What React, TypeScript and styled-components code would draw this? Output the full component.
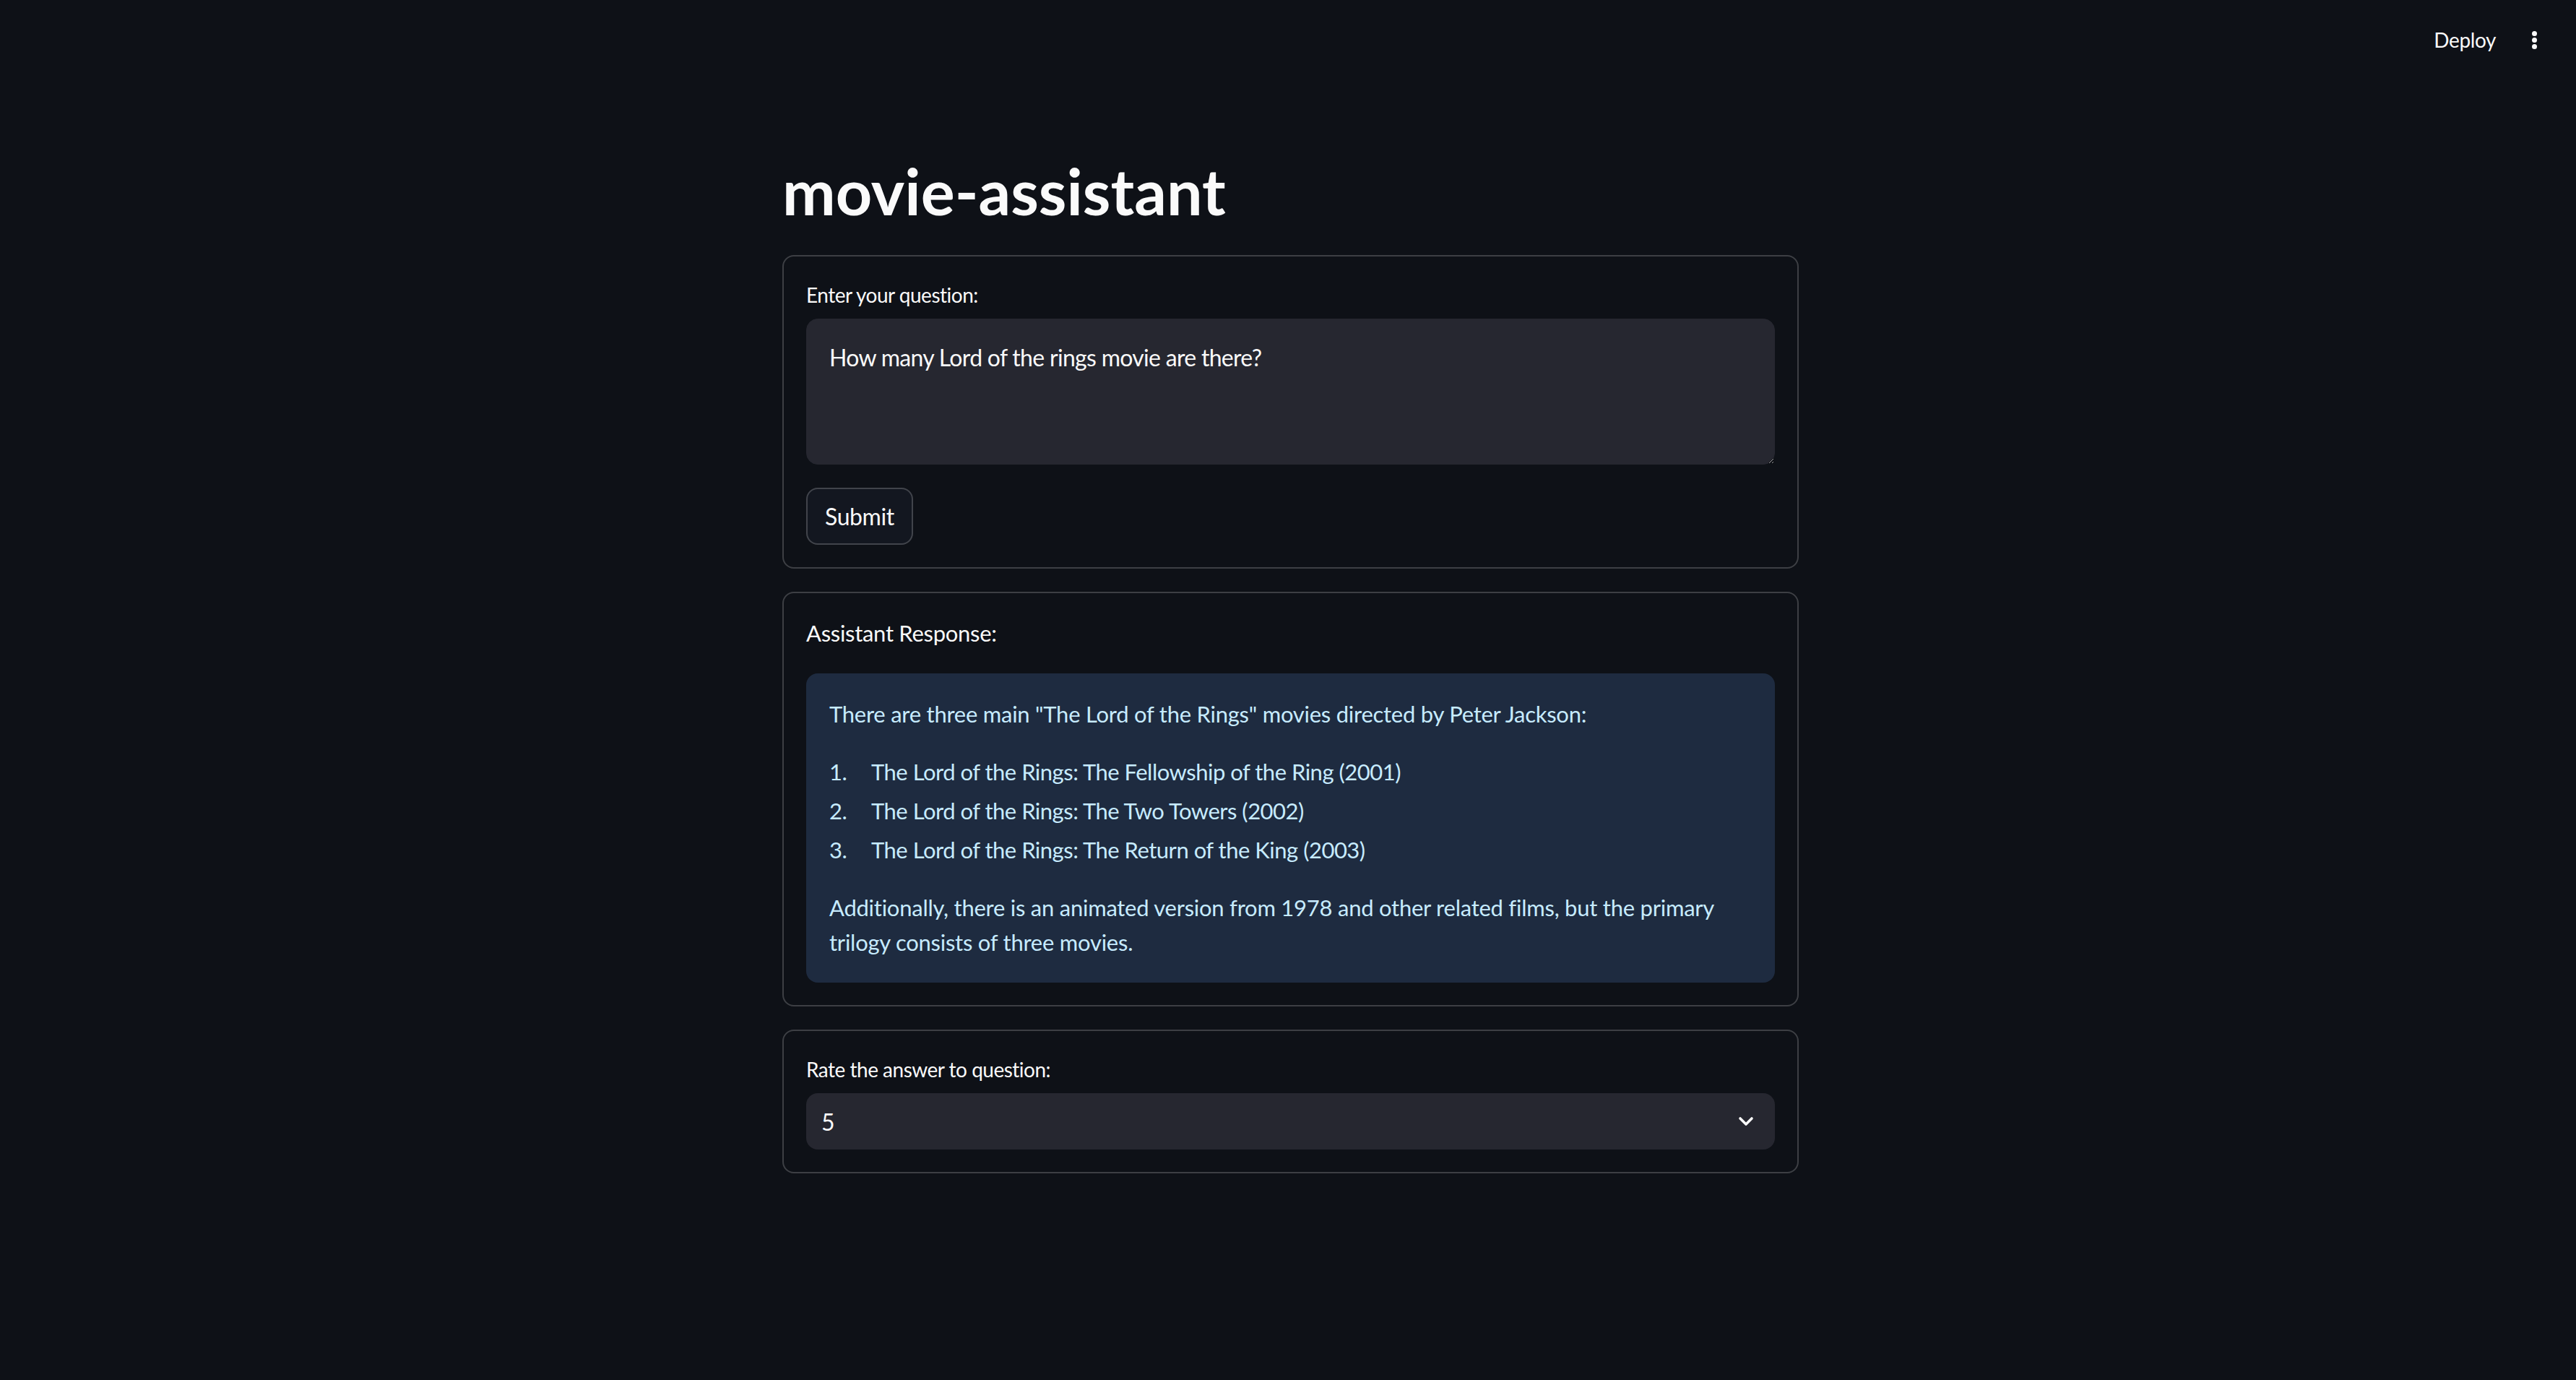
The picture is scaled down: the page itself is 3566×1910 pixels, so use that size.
import React from "react";
import styled, { createGlobalStyle } from "styled-components";

const GlobalStyle = createGlobalStyle`
  html, body {
    margin: 0;
    padding: 0;
    background: #0e1117;
  }
  body {
    font-family: Lato, "Noto Sans", sans-serif;
    color: #fafafa;
  }
`;

const Page = styled.div`
  min-height: 100vh;
  background: #0e1117;
`;

const Header = styled.header`
  height: 110px;
  display: flex;
  align-items: center;
  justify-content: flex-end;
  gap: 50px;
  padding-right: 54px;
`;

const DeployButton = styled.button`
  background: transparent;
  border: none;
  color: #fafafa;
  font: 400 28px Lato, sans-serif;
  letter-spacing: -0.4px;
  padding: 0;
  cursor: pointer;
`;

const MenuDots = styled.div`
  display: flex;
  flex-direction: column;
  gap: 2px;
  cursor: pointer;

  span {
    width: 7px;
    height: 7px;
    border-radius: 50%;
    background: #fafafa;
  }
`;

const Main = styled.main`
  width: 1407px;
  margin-left: calc(50% - 700px);
  padding-top: 101px;
  padding-bottom: 200px;
`;

const Title = styled.h1`
  margin: 0 0 36px;
  font: 700 88px/106px Lato, sans-serif;
  letter-spacing: 0;
  color: #fafafa;
`;

const Stack = styled.div`
  display: flex;
  flex-direction: column;
  gap: 32px;
`;

const Card = styled.section`
  border: 2px solid rgba(250, 250, 250, 0.2);
  border-radius: 16px;
  padding: 31px;
  display: flex;
  flex-direction: column;
`;

const Label = styled.label`
  font-size: 28px;
  letter-spacing: -0.5px;
  line-height: 44.8px;
  height: 47px;
  margin-bottom: 8px;
  color: #fafafa;
`;

const TextArea = styled.textarea`
  box-sizing: border-box;
  width: 100%;
  height: 202px;
  background: #262730;
  border: 1px solid #262730;
  border-radius: 16px;
  padding: 31px 31px;
  color: #fafafa;
  font: 400 32px/44.8px Lato, sans-serif;
  letter-spacing: -0.7px;
  outline: none;
  resize: vertical;
`;

const SubmitButton = styled.button`
  align-self: flex-start;
  margin-top: 32px;
  height: 79px;
  padding: 0 24px;
  background: #131720;
  border: 2px solid rgba(250, 250, 250, 0.2);
  border-radius: 16px;
  color: #fafafa;
  font: 400 32px Lato, sans-serif;
  letter-spacing: -0.4px;
  cursor: pointer;
`;

const Text = styled.p`
  margin: 0 0 32px;
  font-size: 31px;
  letter-spacing: -0.3px;
  line-height: 48px;
`;

const InfoBox = styled.div`
  background: #1e2b40;
  border-radius: 16px;
  padding: 32px;
  color: #c7ebff;
  font-size: 31px;
  letter-spacing: -0.25px;
  line-height: 48px;

  p {
    margin: 0 0 32px;
  }
  p:last-child {
    margin-bottom: 0;
  }
`;

const List = styled.ol`
  list-style: none;
  margin: 0 0 32px;
  padding: 0;

  li {
    display: flex;
    margin: 6px 0;
    letter-spacing: -0.5px;
  }
`;

const Num = styled.span`
  width: 58px;
  flex: none;
`;

const Select = styled.div`
  height: 78px;
  background: #262730;
  border-radius: 16px;
  padding: 0 28px 0 21px;
  display: flex;
  align-items: center;
  justify-content: space-between;
  font-size: 32px;
  color: #fafafa;
  cursor: pointer;
`;

const movies = [
  "The Lord of the Rings: The Fellowship of the Ring (2001)",
  "The Lord of the Rings: The Two Towers (2002)",
  "The Lord of the Rings: The Return of the King (2003)",
];

const Chevron = () => (
  <svg width="24" height="14" viewBox="0 0 24 14" fill="none">
    <polyline
      points="4,3 12,11 20,3"
      stroke="#fafafa"
      strokeWidth="3.6"
      strokeLinecap="round"
      strokeLinejoin="round"
    />
  </svg>
);

export default function App() {
  return (
    <Page>
      <GlobalStyle />
      <Header>
        <DeployButton>Deploy</DeployButton>
        <MenuDots>
          <span />
          <span />
          <span />
        </MenuDots>
      </Header>
      <Main>
        <Title>movie-assistant</Title>
        <Stack>
          <Card>
            <Label>Enter your question:</Label>
            <TextArea defaultValue="How many Lord of the rings movie are there?" />
            <SubmitButton>Submit</SubmitButton>
          </Card>

          <Card>
            <Text>Assistant Response:</Text>
            <InfoBox>
              <p>
                There are three main "The Lord of the Rings" movies directed by
                Peter Jackson:
              </p>
              <List>
                {movies.map((m, i) => (
                  <li key={m}>
                    <Num>{i + 1}.</Num>
                    {m}
                  </li>
                ))}
              </List>
              <p>
                Additionally, there is an animated version from 1978 and other
                related films, but the primary trilogy consists of three movies.
              </p>
            </InfoBox>
          </Card>

          <Card>
            <Label>Rate the answer to question:</Label>
            <Select>
              <span>5</span>
              <Chevron />
            </Select>
          </Card>
        </Stack>
      </Main>
    </Page>
  );
}
